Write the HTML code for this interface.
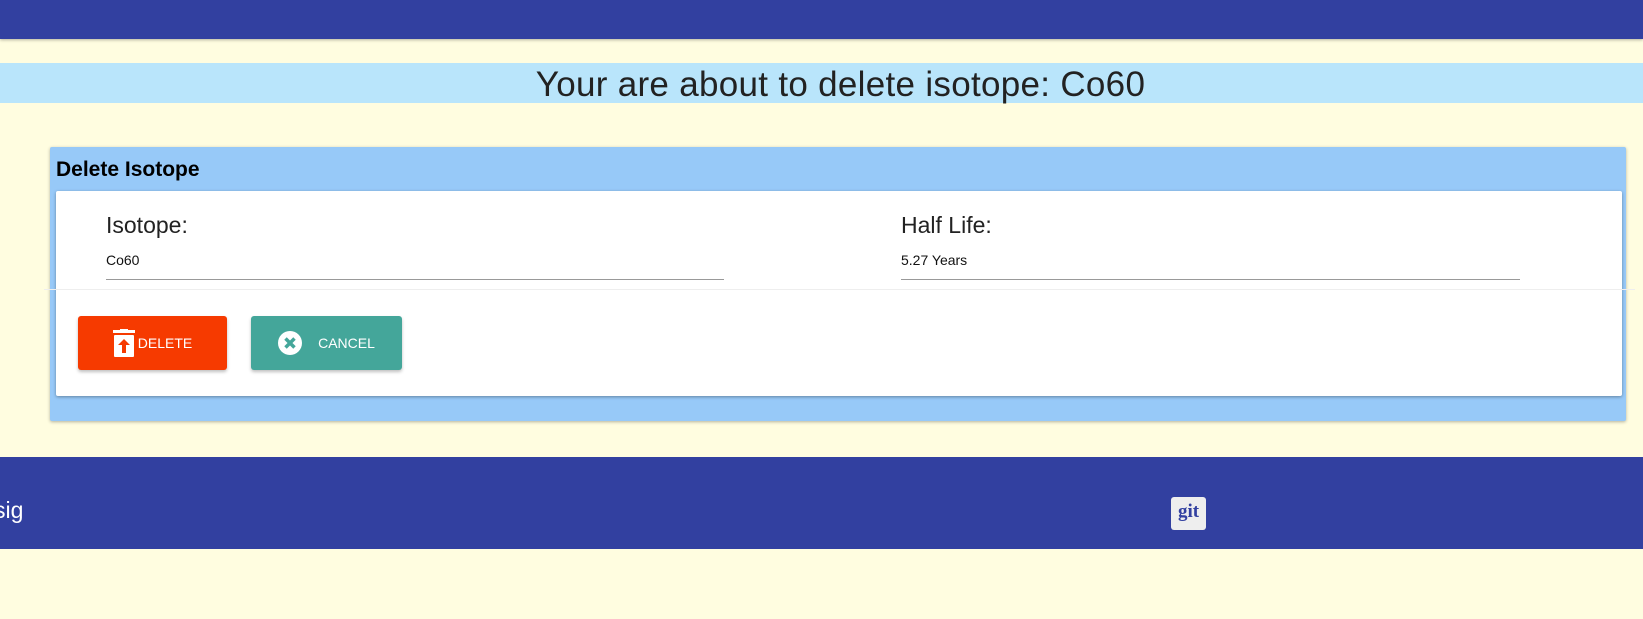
<!DOCTYPE html>
<html><head><style>
body{margin:0;width:1643px;height:619px;background:#fffde0;font-family:"Liberation Sans",sans-serif;position:relative;overflow:hidden}
.abs{position:absolute}
.top{left:0;top:0;width:1643px;height:39px;background:#3240a0;box-shadow:0 1px 3px rgba(0,0,0,.3)}
.ban{left:0;top:63px;width:1643px;height:40px;background:#b9e5fb;text-align:center;font-size:35px;line-height:44px;color:#222;padding-left:38px;box-sizing:border-box;letter-spacing:0.3px}
.card{left:50px;top:147px;width:1576px;height:274px;background:#97c9f8;border-radius:2px;box-shadow:0 1px 3px rgba(0,0,0,.3)}
.card h3{margin:0;position:absolute;left:6px;top:11px;font-size:21px;font-weight:bold;color:#000}
.inner{left:56px;top:191px;width:1566px;height:205px;background:#fff;border-radius:2px;box-shadow:0 1px 3px rgba(0,0,0,.35)}
.lbl{font-size:23px;color:#222}
.val{font-size:14px;color:#111}
.ul{height:1px;background:#999}
.btn{height:54px;border-radius:3px;color:#fff;font-size:14px;box-shadow:0 2px 3px rgba(0,0,0,.25);display:flex;align-items:center;justify-content:center}
.foot{left:0;top:457px;width:1643px;height:92px;background:#3240a0}
</style></head><body>
<div class="abs top"></div>
<div class="abs ban">Your are about to delete isotope: Co60</div>
<div class="abs card"><h3>Delete Isotope</h3></div>
<div class="abs inner"></div>
<div class="abs lbl" style="left:106px;top:212px">Isotope:</div>
<div class="abs val" style="left:106px;top:252px">Co60</div>
<div class="abs ul" style="left:106px;top:279px;width:618px"></div>
<div class="abs lbl" style="left:901px;top:212px">Half Life:</div>
<div class="abs val" style="left:901px;top:252px">5.27 Years</div>
<div class="abs ul" style="left:901px;top:279px;width:619px"></div>
<div class="abs" style="left:44px;top:289px;width:1591px;height:1px;background:#eeeeee"></div>
<div class="abs btn" style="left:78px;top:316px;width:149px;background:#f63a00">
<svg width="22" height="28" viewBox="0 0 22 28" style="margin-right:3px"><rect x="0" y="1" width="22" height="3" fill="#fff"/><rect x="7" y="0" width="8" height="2" fill="#fff"/><rect x="1" y="6" width="20" height="22" rx="1" fill="#fff"/><path d="M11 10 L5 16 H9 V24 H13 V16 H17 Z" fill="#f63a00"/></svg>DELETE</div>
<div class="abs btn" style="left:251px;top:316px;width:151px;background:#44a69a">
<svg width="24" height="24" viewBox="0 0 24 24" style="margin-right:16px"><circle cx="12" cy="12" r="12" fill="#fff"/><path d="M7.5 7.5 L16.5 16.5 M16.5 7.5 L7.5 16.5" stroke="#44a69a" stroke-width="3.5"/></svg>CANCEL</div>
<div class="abs foot"></div>
<div class="abs" style="left:-6px;top:497px;font-size:23px;color:#fff">sig</div>
<div class="abs" style="left:1171px;top:497px;width:35px;height:33px;background:#eee;border-radius:3px;font-family:'Liberation Serif',serif;font-weight:bold;font-size:19px;color:#3240a0;text-align:center;line-height:30px">git</div>
</body></html>
